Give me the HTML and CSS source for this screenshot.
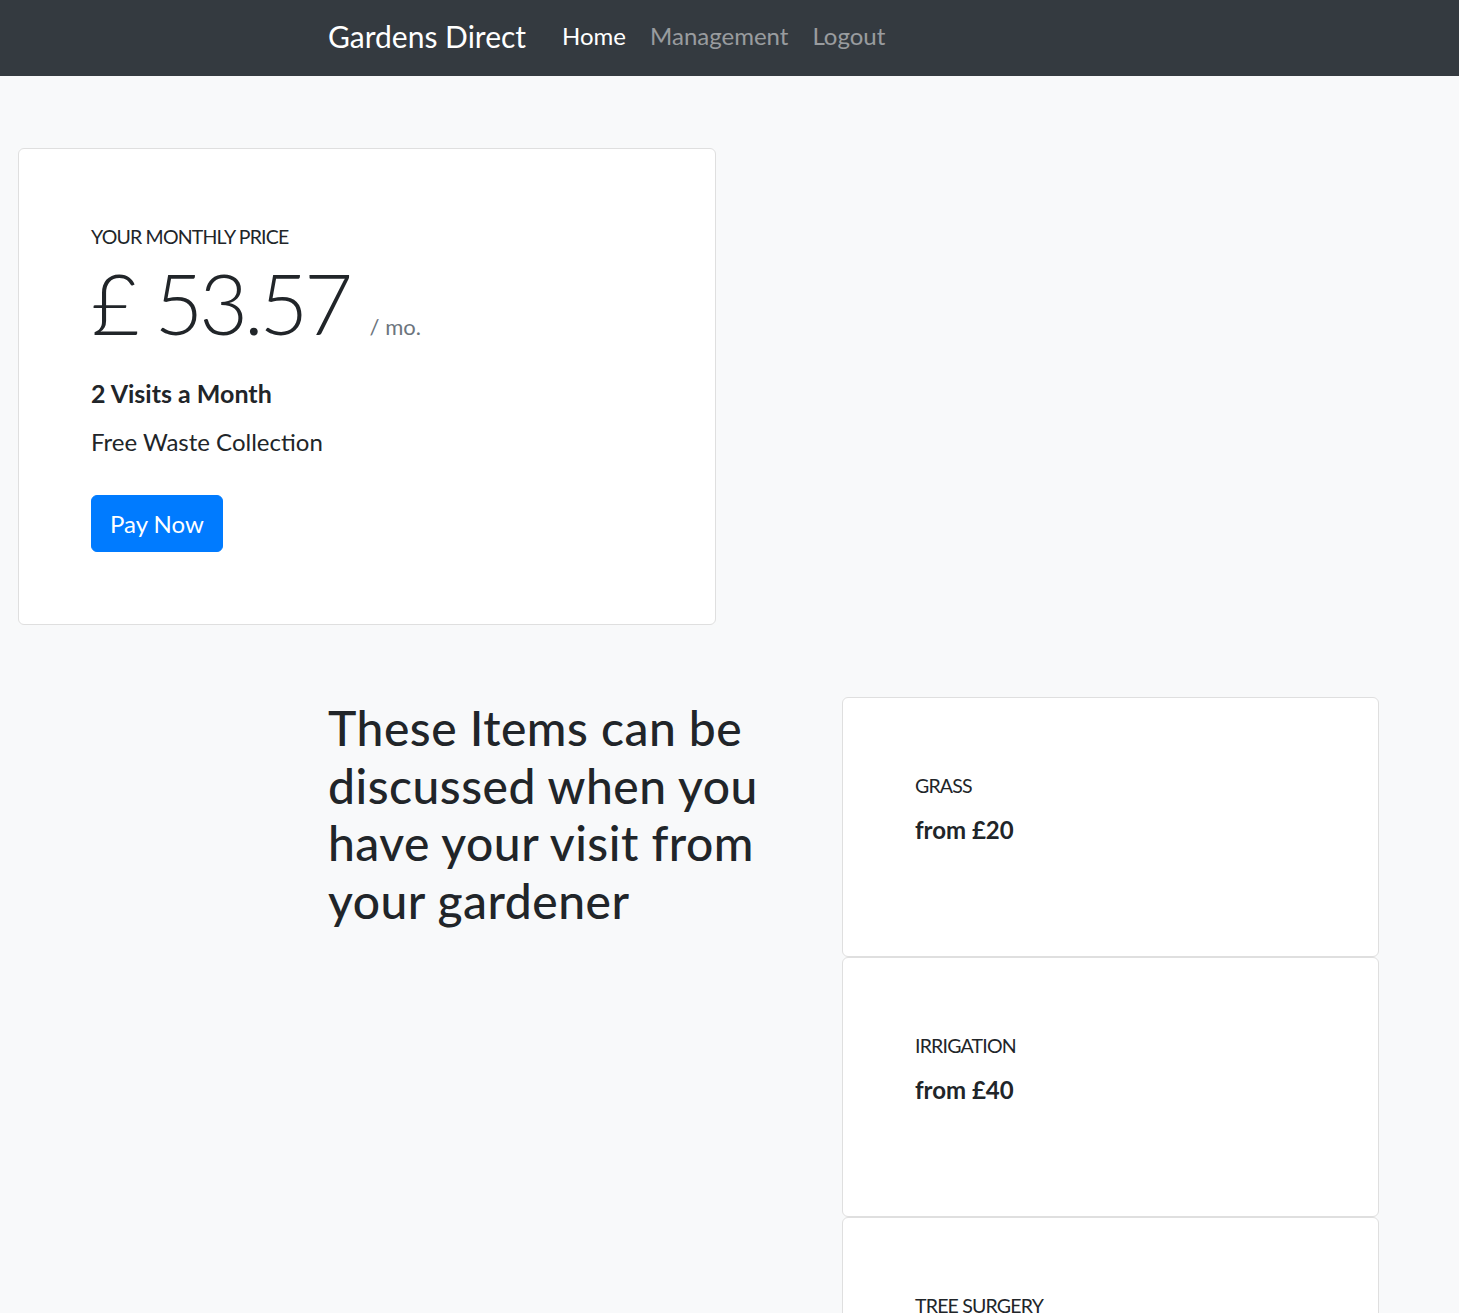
FILE: index.html
```html
<!DOCTYPE html>
<html lang="en">
<head>
<meta charset="utf-8">
<title>Gardens Direct</title>
<link rel="stylesheet" href="styles.css">
</head>
<body>
<nav class="navbar">
  <a class="brand" href="#">Gardens Direct</a>
  <ul class="nav">
    <li><a class="nav-link active" href="#">Home</a></li>
    <li><a class="nav-link" href="#">Management</a></li>
    <li><a class="nav-link" href="#">Logout</a></li>
  </ul>
</nav>
<main class="page">
  <section class="card price-card">
    <div class="label">YOUR MONTHLY PRICE</div>
    <div class="price"><span class="amount">£ 53.57</span> <span class="per">/ mo.</span></div>
    <div class="visits">2 Visits a Month</div>
    <div class="feature">Free Waste Collection</div>
    <button class="btn" type="button">Pay Now</button>
  </section>
  <section class="items">
    <h2 class="items-title">These Items can be discussed when you have your visit from your gardener</h2>
    <div class="item-list">
      <div class="card item-card">
        <div class="label">GRASS</div>
        <div class="item-price">from £20</div>
      </div>
      <div class="card item-card">
        <div class="label">IRRIGATION</div>
        <div class="item-price">from £40</div>
      </div>
      <div class="card item-card">
        <div class="label">TREE SURGERY</div>
        <div class="item-price">from £60</div>
      </div>
    </div>
  </section>
</main>
</body>
</html>
```
FILE: styles.css
```css
* { box-sizing: border-box; }
html, body { margin: 0; padding: 0; }
body {
  background: #f8f9fa;
  color: #212529;
  font-family: Lato, "Open Sans", sans-serif;
  font-size: 24px;
  line-height: 1.5;
}
.navbar {
  background: #343a40;
  height: 76px;
  display: flex;
  align-items: center;
  padding-left: 328px;
  padding-bottom: 4px;
}
.brand {
  color: #fff;
  text-decoration: none;
  font-size: 30px;
  line-height: 45px;
  margin-right: 24px;
}
.nav {
  list-style: none;
  margin: 0;
  padding: 0;
  display: flex;
}
.nav-link {
  display: block;
  padding: 0 12px;
  color: rgba(255,255,255,.5);
  text-decoration: none;
  font-size: 24px;
  line-height: 36px;
}
.nav-link.active { color: #fff; }
.page {
  padding: 72px 0 0 18px;
}
.card {
  background: #fff;
  border: 1px solid #dfdfdf;
  border-radius: 6px;
}
.price-card {
  width: 698px;
  padding: 72px;
}
.label {
  font-size: 19.5px;
  letter-spacing: -0.8px;
  line-height: 31.5px;
  text-transform: uppercase;
}
.price {
  font-weight: 300;
  line-height: 100px;
  height: 100px;
}
.amount {
  font-size: 84px;
  letter-spacing: -4px;
}
.per {
  font-size: 22px;
  font-weight: 400;
  color: #6c757d;
  margin-left: 14px;
}
.visits {
  font-size: 25px;
  font-weight: 700;
  margin-top: 22px;
  line-height: 37.5px;
}
.feature {
  margin-top: 12px;
  line-height: 36px;
}
.btn {
  display: block;
  margin-top: 35px;
  background: #007bff;
  color: #fff;
  border: 1px solid #007bff;
  border-radius: 6px;
  font-family: inherit;
  font-size: 24px;
  line-height: 36px;
  padding: 9px 18px;
  height: 57px;
}
.items {
  display: flex;
  align-items: flex-start;
  margin-top: 72px;
  padding-left: 310px;
}
.items-title {
  width: 480px;
  margin: 2px 34px 0 0;
  font-size: 48px;
  font-weight: 500;
  letter-spacing: 0.5px;
  line-height: 57.6px;
}
.item-list {
  width: 537px;
  display: flex;
  flex-direction: column;
}
.item-card {
  height: 260px;
  padding: 72px;
}
.item-price {
  font-size: 24px;
  font-weight: 700;
  margin-top: 10px;
  line-height: 36px;
}
```
